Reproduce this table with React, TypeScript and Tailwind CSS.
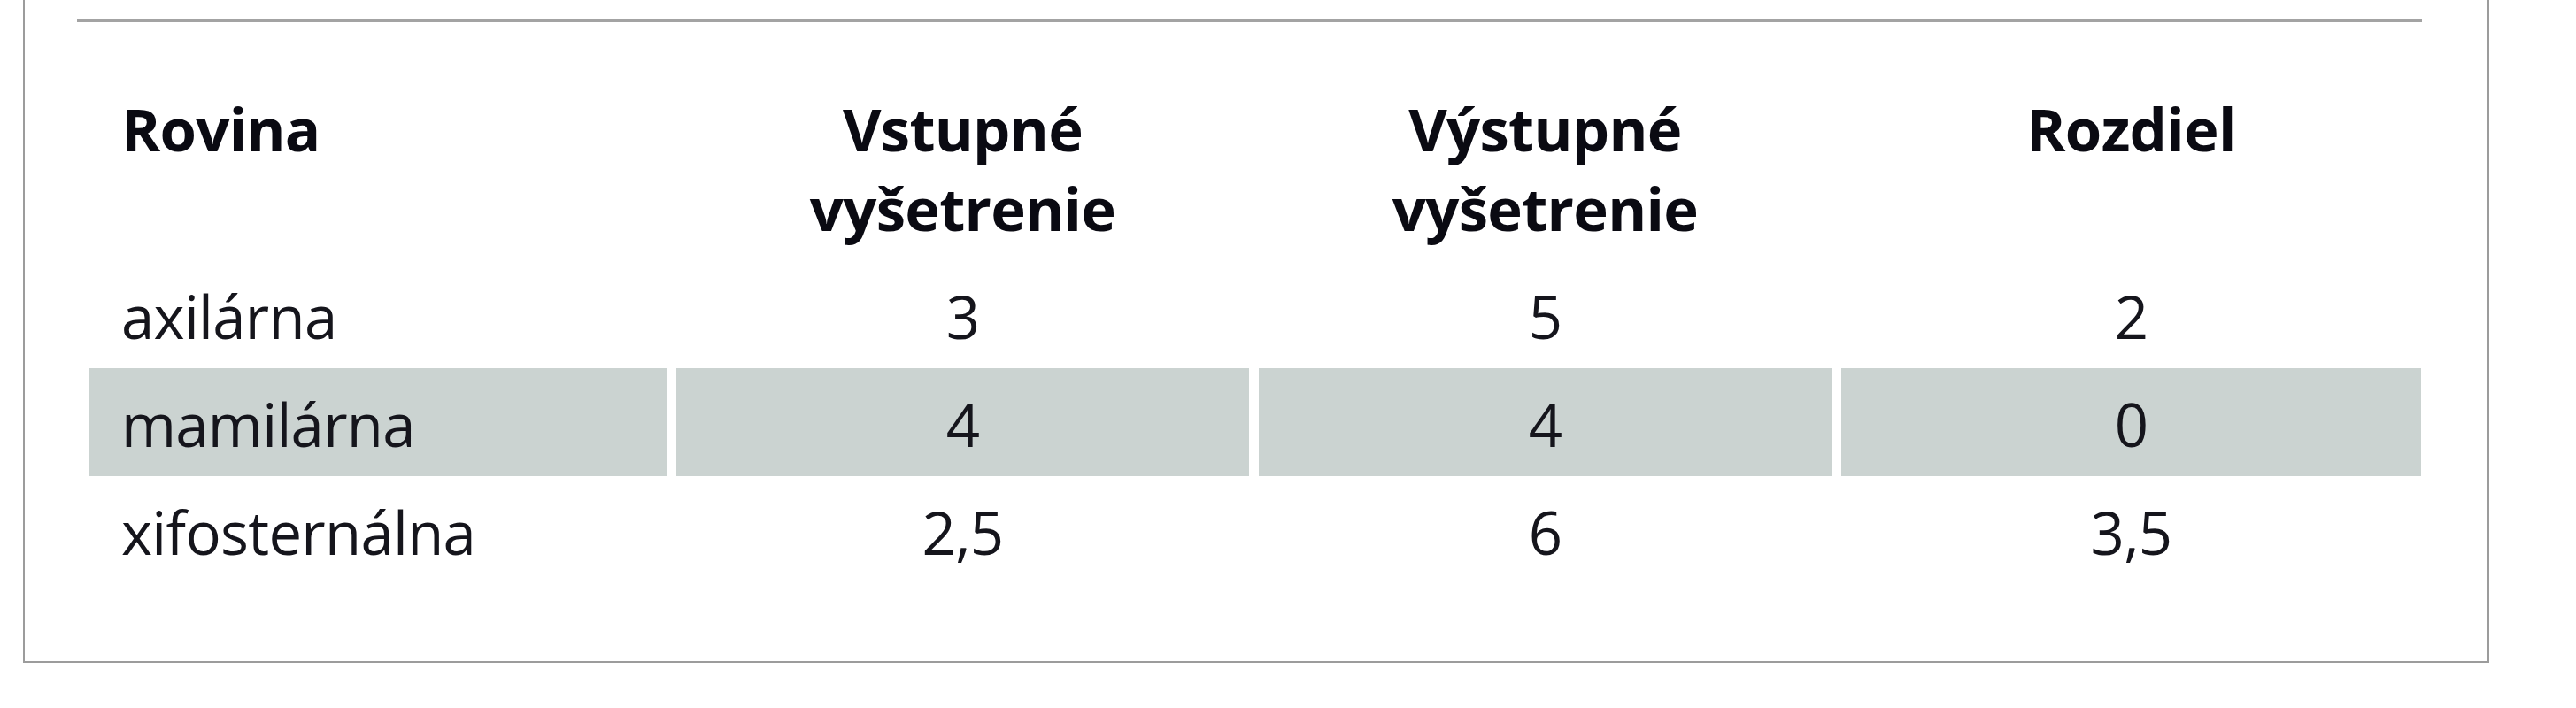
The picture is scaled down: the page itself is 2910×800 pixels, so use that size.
const rows = [
  { name: "axilárna", a: "3", b: "5", d: "2", shade: false },
  { name: "mamilárna", a: "4", b: "4", d: "0", shade: true },
  { name: "xifosternálna", a: "2,5", b: "6", d: "3,5", shade: false },
];

export default function App() {
  return (
    <div className="w-[2910px] h-[800px] bg-white font-['Open_Sans','Noto_Sans',sans-serif]">
      <div className="ml-[26px] w-[2786px] h-[749px] border-x-2 border-b-2 border-[#9c9c9c] pt-[22px]">
        {/* top rule */}
        <div className="ml-[59px] w-[2649px] h-[3px] bg-[#a3a3a3]" />

        <div className="ml-[72px] mt-[75px] grid grid-cols-[653px_647px_647px_655px] gap-x-[11px] text-[67px] tracking-[-0.7px]">
          {/* header */}
          <div className="pl-[37px] pb-[14px] font-bold leading-[90px] text-[#0a0a12]">Rovina</div>
          <div className="pb-[14px] font-bold leading-[90px] text-center text-[#0a0a12]">
            Vstupné
            <br />
            vyšetrenie
          </div>
          <div className="pb-[14px] font-bold leading-[90px] text-center text-[#0a0a12]">
            Výstupné
            <br />
            vyšetrenie
          </div>
          <div className="pb-[14px] font-bold leading-[90px] text-center text-[#0a0a12]">Rozdiel</div>

          {rows.map((r) => (
            <Row key={r.name} {...r} />
          ))}
        </div>
      </div>
    </div>
  );
}

function Row({ name, a, b, d, shade }: { name: string; a: string; b: string; d: string; shade: boolean }) {
  const cell = shade ? "bg-[#cbd3d1]" : "bg-white";
  return (
    <>
      <div className={`h-[122px] pt-[4px] leading-[118px] pl-[37px] text-[#15151c] ${cell}`}>{name}</div>
      <div className={`h-[122px] pt-[4px] leading-[118px] text-center text-[#15151c] ${cell}`}>{a}</div>
      <div className={`h-[122px] pt-[4px] leading-[118px] text-center text-[#15151c] ${cell}`}>{b}</div>
      <div className={`h-[122px] pt-[4px] leading-[118px] text-center text-[#15151c] ${cell}`}>{d}</div>
    </>
  );
}
